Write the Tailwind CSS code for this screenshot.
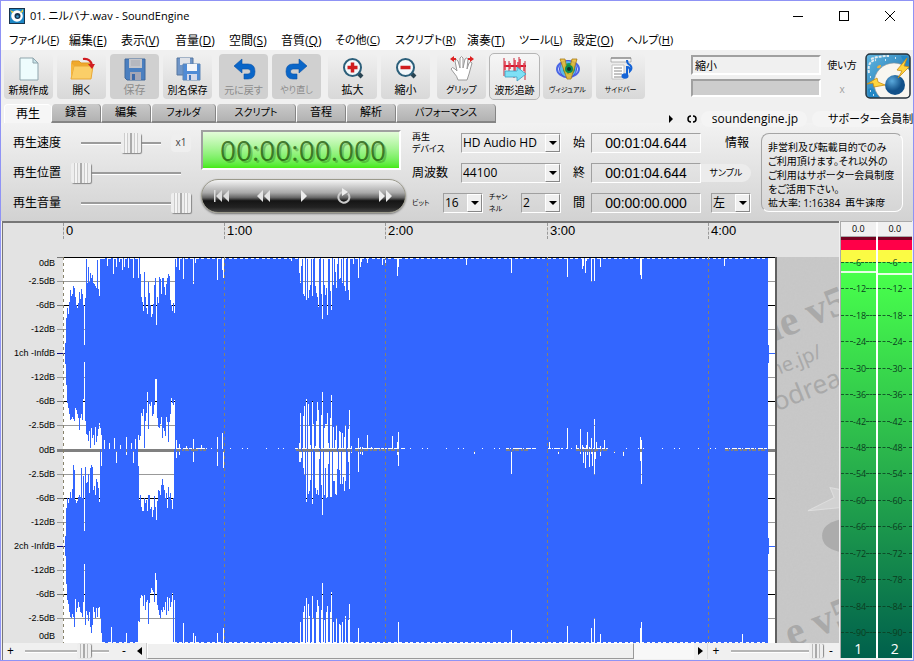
<!DOCTYPE html>
<html lang="ja">
<head>
    <meta charset="UTF-8">
    <meta name="viewport" content="width=device-width, initial-scale=1.0">
    <title>SoundEngine</title>
    <script src="https://cdn.jsdelivr.net/npm/@tailwindcss/browser@4"></script>
</head>
<body class="h-screen flex flex-col overflow-hidden border border-[#8f93f5] bg-[#f0f0f0] text-black text-xs font-['Open_Sans','Noto_Sans_CJK_JP',sans-serif] [font-feature-settings:'palt']">

    <!-- Title bar -->
    <header class="h-[30px] shrink-0 flex items-center bg-white pl-2">
        <svg class="w-4 h-4 mr-[5px]" viewBox="0 0 16 16">
            <rect width="16" height="16" fill="#1d86c4"/>
            <rect x=".5" y=".5" width="15" height="15" fill="none" stroke="#17334a"/>
            <circle cx="8" cy="8" r="5.8" fill="#fff"/>
            <circle cx="8.5" cy="8" r="3" fill="#16344e"/>
            <circle cx="8.5" cy="8.5" r="1.3" fill="#3b9bd0"/>
            <path d="M1 2l4 2-2 1zM14 1l-3 4 3-1z" fill="#f5d23c"/>
        </svg>
        <h1 class="flex-1 text-[11px]">01. ニルバナ.wav - SoundEngine</h1>
        <button aria-label="最小化" class="w-[46px] h-full flex items-center justify-center"><svg class="w-[10px] h-[10px]" viewBox="0 0 10 10" shape-rendering="crispEdges"><path d="M0 5.5h10" stroke="#000"/></svg></button>
        <button aria-label="最大化" class="w-[46px] h-full flex items-center justify-center"><svg class="w-[10px] h-[10px]" viewBox="0 0 10 10" shape-rendering="crispEdges"><path d="M.5.5h9v9h-9z" fill="none" stroke="#000"/></svg></button>
        <button aria-label="閉じる" class="w-[46px] h-full flex items-center justify-center"><svg class="w-[10px] h-[10px]" viewBox="0 0 10 10"><path d="M0 0l10 10M10 0L0 10" stroke="#000"/></svg></button>
    </header>

    <!-- Menu -->
    <nav class="h-[19px] shrink-0 flex items-center bg-white pl-2 whitespace-nowrap">
        <button class="w-[60px] text-left text-[11px]">ファイル(<u>F</u>)</button>
        <button class="w-[52px] text-left">編集(<u>E</u>)</button>
        <button class="w-[54px] text-left">表示(<u>V</u>)</button>
        <button class="w-[54px] text-left">音量(<u>D</u>)</button>
        <button class="w-[52px] text-left">空間(<u>S</u>)</button>
        <button class="w-[54px] text-left">音質(<u>Q</u>)</button>
        <button class="w-[60px] text-left text-[11px]">その他(<u>C</u>)</button>
        <button class="w-[72px] text-left text-[11px]">スクリプト(<u>R</u>)</button>
        <button class="w-[52px] text-left">演奏(<u>T</u>)</button>
        <button class="w-[54px] text-left text-[11px]">ツール(<u>L</u>)</button>
        <button class="w-[54px] text-left">設定(<u>O</u>)</button>
        <button class="w-[54px] text-left text-[11px]">ヘルプ(<u>H</u>)</button>
    </nav>

    <!-- Toolbar -->
    <div class="h-[54px] shrink-0 flex items-start pl-[3px] pr-[2px] pt-[3px]">
        <div class="flex gap-[7px] pt-px">
            <div class="flex gap-1">
                <button class="w-[49px] h-[45px] rounded-sm bg-linear-to-b from-[#f0f0f0] to-[#d8d8d8] flex flex-col items-center">
                    <svg class="w-7 h-7" viewBox="0 0 28 28"><path d="M5 4h13l5 5v17H5z" fill="#eefcfd" stroke="#8fa5ad"/><path d="M18 4v5h5z" fill="#c9e5ea" stroke="#8fa5ad"/></svg>
                    <span class="text-[10px] leading-4">新規作成</span>
                </button>
                <button class="w-[49px] h-[45px] rounded-sm bg-linear-to-b from-[#f0f0f0] to-[#d8d8d8] flex flex-col items-center">
                    <svg class="w-7 h-7" viewBox="0 0 28 28"><path d="M4 7h7l2 2h10v6H4z" fill="#f0a92c" stroke="#dd9826"/><path d="M3 25l3-13h19l-2 13z" fill="#fbcf68" stroke="#e9a836"/><path d="M3 8v17l3-13" fill="#f5b63f"/><path d="M15 5q7-1 9 6" fill="none" stroke="#d01c22" stroke-width="2"/><path d="M20 10h7l-3 5z" fill="#d01c22"/></svg>
                    <span class="text-[11px] leading-4">開く</span>
                </button>
                <button disabled class="w-[49px] h-[45px] rounded-sm bg-[#d0d0d0] text-[#8c8c8c] flex flex-col items-center">
                    <svg class="w-7 h-7" viewBox="0 0 28 28"><path d="M4 5h20v21H6l-2-2z" fill="#4a7fc0" stroke="#41689a"/><path d="M8 5h13v9H8z" fill="#c3c5cb"/><path d="M10 7h9M10 9h9M10 11h9" stroke="#a8abb3"/><path d="M9 18h11v8H9z" fill="#a4a6b5"/><path d="M11 20h3v6h-3z" fill="#3d69a8"/></svg>
                    <span class="text-[11px] leading-4">保存</span>
                </button>
                <button class="w-[49px] h-[45px] rounded-sm bg-linear-to-b from-[#f0f0f0] to-[#d8d8d8] flex flex-col items-center">
                    <svg class="w-7 h-7" viewBox="0 0 28 28"><path d="M3 4h16v17H3z" fill="#7096c8" stroke="#56779f"/><path d="M6 4h10v7H6z" fill="#dfe2e8"/><path d="M9 10h17v16H9z" fill="#4f8bd6" stroke="#5f86b5"/><path d="M13 10h10v7H13z" fill="#f4f6fa"/><path d="M13 20h10v6H13z" fill="#d3d8ea"/><path d="M15 21h2v5h-2z" fill="#3f74bd"/></svg>
                    <span class="text-[10px] leading-4">別名保存</span>
                </button>
            </div>
            <div class="flex gap-1">
                <button disabled class="w-[49px] h-[45px] rounded-sm bg-[#d0d0d0] text-[#8c8c8c] flex flex-col items-center">
                    <svg class="w-7 h-7" viewBox="0 0 28 28"><path d="M12 5L4 12l8 7v-4h6q2.500 0 2.500 2.500T18 20h-4v5h4q7 0 7-7.500T18 10h-6z" fill="#0a66c8" stroke="#0750a8" stroke-width=".6"/></svg>
                    <span class="text-[10px] leading-4">元に戻す</span>
                </button>
                <button disabled class="w-[49px] h-[45px] rounded-sm bg-[#d0d0d0] text-[#8c8c8c] flex flex-col items-center">
                    <svg class="w-7 h-7" viewBox="0 0 28 28"><path d="M16 5l8 7-8 7v-4h-6q-2.500 0-2.500 2.500T10 20h4v5h-4q-7 0-7-7.500T10 10h6z" fill="#0a66c8" stroke="#0750a8" stroke-width=".6"/></svg>
                    <span class="text-[9px] leading-4">やり直し</span>
                </button>
            </div>
            <div class="flex gap-1">
                <button class="w-[49px] h-[45px] rounded-sm bg-linear-to-b from-[#f0f0f0] to-[#d8d8d8] flex flex-col items-center">
                    <svg class="w-7 h-7" viewBox="0 0 28 28"><path d="M19 19l4 4" stroke="#2a4452" stroke-width="4"/><circle cx="13.500" cy="13.500" r="8.500" fill="#f3f8fb" stroke="#2c5f7a" stroke-width="2"/><path d="M13.500 8.500v10M8.500 13.500h10" stroke="#cf1d20" stroke-width="3.500"/></svg>
                    <span class="text-[11px] leading-4">拡大</span>
                </button>
                <button class="w-[49px] h-[45px] rounded-sm bg-linear-to-b from-[#f0f0f0] to-[#d8d8d8] flex flex-col items-center">
                    <svg class="w-7 h-7" viewBox="0 0 28 28"><path d="M19 19l4 4" stroke="#2a4452" stroke-width="4"/><circle cx="13.500" cy="13.500" r="8.500" fill="#f3f8fb" stroke="#2c5f7a" stroke-width="2"/><path d="M8.500 13.500h10" stroke="#cf1d20" stroke-width="3.500"/></svg>
                    <span class="text-[11px] leading-4">縮小</span>
                </button>
            </div>
            <div class="flex gap-1">
                <button class="w-[49px] h-[45px] rounded-sm bg-linear-to-b from-[#f0f0f0] to-[#d8d8d8] flex flex-col items-center">
                    <svg class="w-7 h-7" viewBox="0 0 28 28"><path d="M10 26q-1-4-4-7l-3-4q1-3 4 0l2 2L7 7q1-3 3 0l2 7V4q1.500-3 3 0v10l2-9q2-2 3 0l-1 10 2-6q2-2 3 0l-3 11-2 6z" fill="#fff" stroke="#9a9a9a"/><path d="M2 5l4-3v2h2v2H6v2zM26 5l-4-3v2h-2v2h2v2z" fill="#d22"/></svg>
                    <span class="text-[9px] leading-4">グリップ</span>
                </button>
                <button class="w-[49px] h-[45px] rounded-sm bg-linear-to-b from-[#f6f6f6] to-[#e4e4e4] outline outline-[#b5b5b5] flex flex-col items-center">
                    <svg class="w-7 h-7" viewBox="0 0 28 28"><path d="M3 12h22" stroke="#d3152b" stroke-width="2"/><path d="M3 4v18M8 7v12M13 4v20M18 3v18M24 7v19" stroke="#c8283a"/><path d="M4 7v9M9 9v6M14 6v14M17 8v10M19 5v12M23 9v8" stroke="#e2394b" stroke-width="1.500"/><path d="M4 17h12v-4l9 7-9 7v-4H4z" fill="#7fe0f5" stroke="#3a9fc0" stroke-width=".8"/></svg>
                    <span class="text-[10px] leading-4">波形追跡</span>
                </button>
                <button class="w-[49px] h-[45px] rounded-sm bg-linear-to-b from-[#f0f0f0] to-[#d8d8d8] flex flex-col items-center">
                    <svg class="w-7 h-7" viewBox="0 0 28 28"><ellipse cx="14" cy="15" rx="11" ry="8" fill="#cfe3ff" stroke="#4a67e6" stroke-width="2"/><circle cx="14" cy="15" r="8.500" fill="#5cb8e8" stroke="#4a4ad8"/><circle cx="15" cy="15" r="6" fill="#0c9a5a"/><path d="M6 5h5l3 15 4-15h5l-6 20h-4z" fill="#f1bf2d" fill-opacity=".85" stroke="#a57a1c" stroke-width=".8"/><circle cx="15" cy="15" r="4" fill="#0b8a50"/><circle cx="15" cy="15" r="2" fill="#10302a"/></svg>
                    <span class="text-[7px] leading-4">ヴィジュアル</span>
                </button>
                <button class="w-[49px] h-[45px] rounded-sm bg-linear-to-b from-[#f0f0f0] to-[#d8d8d8] flex flex-col items-center">
                    <svg class="w-7 h-7" viewBox="0 0 28 28"><path d="M4 4h20v4H4z" fill="#f6f6f6" stroke="#999" stroke-width=".7"/><path d="M4 4h20" stroke="#777"/><path d="M5 11h12v14H5z" fill="#fff" stroke="#c2c2c2"/><path d="M7 14h8M7 17h8M7 20h8M7 23h8" stroke="#888"/><path d="M20 6q0 4 3 5 3 3 0 6 0-4-3-4v9" fill="none" stroke="#1463d6" stroke-width="2"/><ellipse cx="18" cy="22" rx="3.500" ry="2.800" fill="#1463d6"/></svg>
                    <span class="text-[7px] leading-4">サイドバー</span>
                </button>
            </div>
        </div>
        <div class="ml-auto flex gap-1">
            <div class="w-[130px] flex flex-col gap-1 pt-[2px]">
                <input type="text" aria-label="状態" value="縮小" readonly class="h-5 px-[2px] text-[11px] bg-[#f0f0f0] border-2 border-t-[#a0a0a0] border-l-[#a0a0a0] border-b-white border-r-white outline-none">
                <div class="h-[18px] bg-[#cdcdcd] border-2 border-t-[#a0a0a0] border-l-[#a0a0a0] border-b-white border-r-white"></div>
            </div>
            <div class="w-[34px] flex flex-col items-center text-[10px]">
                <button class="h-[25px] whitespace-nowrap">使い方</button>
                <button disabled class="h-[23px] text-[#a0a0a0]">x</button>
            </div>
            <svg class="w-[46px] h-[46px] ml-[2px]" viewBox="0 0 46 46">
                <defs>
                    <linearGradient id="sky" x2="1" y2="1"><stop stop-color="#61b9e4"/><stop offset="1" stop-color="#12629f"/></linearGradient>
                    <radialGradient id="ball" cx=".35" cy=".3"><stop stop-color="#5aa9dc"/><stop offset="1" stop-color="#125189"/></radialGradient>
                    <clipPath id="frame"><rect x="1" y="1" width="44" height="44" rx="4"/></clipPath>
                </defs>
                <g clip-path="url(#frame)">
                    <rect width="46" height="46" fill="url(#sky)"/>
                    <path d="M3 36q6-3 10 8H4zM36 3h6l2 8q-6-1-8-8z" fill="#2187c5"/>
                    <path d="M4 20q-2-12 7-13M6 6q8-3 18-3" fill="none" stroke="#e3ebef" stroke-width="2" stroke-dasharray="3 1"/>
                    <circle cx="29" cy="30" r="20" fill="#f8f6f0" stroke="#8d9499" stroke-width=".6"/>
                    <circle cx="30" cy="32" r="10" fill="url(#ball)"/>
                    <path d="M42 5l-10 12 5 1-4 7 11-11-5-1 3-8zM2 31l10-6 1 4 7 3-11 2-1-4z" fill="#ffd53d" stroke="#c98a12" stroke-width=".8"/>
                    <path d="M12 15q0-3 4-3 0 4-4 3z" fill="#f2b13a"/>
                    <path d="M5 38h1M8 42h1M30 5h1M5 24h1M20 7h1" stroke="#fff" stroke-width="1.500"/>
                </g>
                <rect x="1" y="1" width="44" height="44" rx="4" fill="none" stroke="#26333d" stroke-width="1.500"/>
            </svg>
        </div>
    </div>

    <!-- Tabs -->
    <div class="relative z-10 h-[19px] shrink-0 flex pl-[3px]">
        <div class="flex h-[19px]" role="tablist">
            <button role="tab" class="w-[47px] rounded-t bg-[#f6f6f6] border-t border-l border-white">再生</button>
            <button role="tab" class="w-[50px] rounded-t bg-linear-to-b from-[#cacaca] to-[#b2b2b2] border-l border-r border-l-white border-r-[#858585] border-b-2 border-b-[#858585] text-[11px]">録音</button>
            <button role="tab" class="w-[50px] rounded-t bg-linear-to-b from-[#cacaca] to-[#b2b2b2] border-l border-r border-l-white border-r-[#858585] border-b-2 border-b-[#858585] text-[11px]">編集</button>
            <button role="tab" class="w-[65px] rounded-t bg-linear-to-b from-[#cacaca] to-[#b2b2b2] border-l border-r border-l-white border-r-[#858585] border-b-2 border-b-[#858585] text-[10px]">フォルダ</button>
            <button role="tab" class="w-[80px] rounded-t bg-linear-to-b from-[#cacaca] to-[#b2b2b2] border-l border-r border-l-white border-r-[#858585] border-b-2 border-b-[#858585] text-[10px]">スクリプト</button>
            <button role="tab" class="w-[50px] rounded-t bg-linear-to-b from-[#cacaca] to-[#b2b2b2] border-l border-r border-l-white border-r-[#858585] border-b-2 border-b-[#858585] text-[11px]">音程</button>
            <button role="tab" class="w-[50px] rounded-t bg-linear-to-b from-[#cacaca] to-[#b2b2b2] border-l border-r border-l-white border-r-[#858585] border-b-2 border-b-[#858585] text-[11px]">解析</button>
            <button role="tab" class="w-[100px] rounded-t bg-linear-to-b from-[#cacaca] to-[#b2b2b2] border-l border-r border-l-white border-r-[#858585] border-b-2 border-b-[#858585] text-[10px]">パフォーマンス</button>
        </div>
        <div class="ml-auto w-[246px] h-[19px] mt-[5px] flex items-center overflow-hidden whitespace-nowrap">
            <button aria-label="次へ" class="w-5 shrink-0"><svg class="w-2 h-2" viewBox="0 0 8 8"><path d="M2 0l4 4-4 4z"/></svg></button>
            <button aria-label="更新" class="w-[14px] shrink-0"><svg class="w-[10px] h-2" viewBox="0 0 10 8"><path d="M4 1Q1 1 1 4t3 3M6 1q3 0 3 3T6 7" fill="none" stroke="#000" stroke-width="1.500"/></svg></button>
            <a href="#" class="w-[106px] pl-[2px] shrink-0 text-center rounded-full bg-[#f4f4f4]">soundengine.jp</a>
            <a href="#" class="ml-[5px] pl-4 shrink-0 rounded-full bg-[#f4f4f4] text-[11px] leading-4">サポーター会員制度</a>
        </div>
    </div>

    <!-- Playback panel -->
    <div class="h-[98px] shrink-0 flex pl-3 pr-[10px] pt-[5px] bg-linear-to-b from-[#f2f2f2] to-[#d2d2d2]">
        <div class="w-[188px] shrink-0">
            <div class="h-[30px] flex items-center">
                <label for="speed" class="w-[58px]">再生速度</label>
                <input id="speed" type="range" min="0" max="80" value="50" class="w-[100px] h-5 appearance-none bg-[linear-gradient(#9b9b9b_67%,#fff_67%)] bg-[length:calc(100%-20px)_3px] bg-center bg-no-repeat [&::-webkit-slider-thumb]:appearance-none [&::-webkit-slider-thumb]:w-5 [&::-webkit-slider-thumb]:h-5 [&::-webkit-slider-thumb]:rounded-[2px] [&::-webkit-slider-thumb]:shadow-[1px_1px_1px_#888] [&::-webkit-slider-thumb]:bg-[linear-gradient(90deg,#eee_0_3px,#ccc_3px_4px,#f4f4f4_4px_6px,#ccc_6px_7px,#eee_7px_9px,#aaa_9px_11px,#eee_11px_13px,#ccc_13px_14px,#f4f4f4_14px_16px,#ccc_16px_17px,#eee_17px)]">
                <button class="w-5 h-[18px] text-[10px] text-[#444] bg-[#efefef] rounded-sm">x1</button>
            </div>
            <div class="h-[30px] flex items-center">
                <label for="position" class="w-[58px]">再生位置</label>
                <input id="position" type="range" min="0" max="100" value="0" class="w-[120px] h-5 appearance-none bg-[linear-gradient(#9b9b9b_67%,#fff_67%)] bg-[length:calc(100%-20px)_3px] bg-center bg-no-repeat [&::-webkit-slider-thumb]:appearance-none [&::-webkit-slider-thumb]:w-5 [&::-webkit-slider-thumb]:h-5 [&::-webkit-slider-thumb]:rounded-[2px] [&::-webkit-slider-thumb]:shadow-[1px_1px_1px_#888] [&::-webkit-slider-thumb]:bg-[linear-gradient(90deg,#eee_0_3px,#ccc_3px_4px,#f4f4f4_4px_6px,#ccc_6px_7px,#eee_7px_9px,#aaa_9px_11px,#eee_11px_13px,#ccc_13px_14px,#f4f4f4_14px_16px,#ccc_16px_17px,#eee_17px)]">
            </div>
            <div class="h-[30px] flex items-center">
                <label for="volume" class="w-[58px]">再生音量</label>
                <input id="volume" type="range" min="0" max="100" value="100" class="w-[120px] h-5 appearance-none bg-[linear-gradient(#9b9b9b_67%,#fff_67%)] bg-[length:calc(100%-20px)_3px] bg-center bg-no-repeat [&::-webkit-slider-thumb]:appearance-none [&::-webkit-slider-thumb]:w-5 [&::-webkit-slider-thumb]:h-5 [&::-webkit-slider-thumb]:rounded-[2px] [&::-webkit-slider-thumb]:shadow-[1px_1px_1px_#888] [&::-webkit-slider-thumb]:bg-[linear-gradient(90deg,#eee_0_3px,#ccc_3px_4px,#f4f4f4_4px_6px,#ccc_6px_7px,#eee_7px_9px,#aaa_9px_11px,#eee_11px_13px,#ccc_13px_14px,#f4f4f4_14px_16px,#ccc_16px_17px,#eee_17px)]">
            </div>
        </div>

        <div class="w-[205px] shrink-0 pt-[2px] flex flex-col items-start gap-[9px]">
            <div class="w-[200px] h-10 pl-1 flex items-center justify-center border-2 border-t-[#a0a0a0] border-l-[#a0a0a0] border-b-white border-r-white bg-linear-to-b from-[#e2fbd8] to-[#44ea0c] text-[28px] leading-none text-[#245a10]/80 text-shadow-[2px_2px_0_rgb(40_110_20/0.35)]">00:00:00.000</div>
            <div class="w-full h-[34px] px-3 flex items-center justify-between rounded-full border border-[#9b9a8c] bg-[linear-gradient(#f4f4f4,#a8a8a8_40%,#666_55%,#151515_65%,#222_85%,#444)] shadow-[0_1px_2px_#777]">
                <button aria-label="先頭"><svg class="w-4 h-3" viewBox="0 0 16 12" fill="#ddd"><path d="M0 0h1.500v12H0zM8 0v12L2 6zM15 0v12L9 6z"/></svg></button>
                <button aria-label="巻戻し"><svg class="w-4 h-3" viewBox="0 0 16 12" fill="#e4e4e4"><path d="M8 0v12L2 6zM15 0v12L9 6z"/></svg></button>
                <button aria-label="再生"><svg class="w-4 h-3" viewBox="0 0 16 12" fill="#eee"><path d="M5 0l6 6-6 6z"/></svg></button>
                <button aria-label="リピート"><svg class="w-4 h-4" viewBox="0 0 16 16"><path d="M12 5.500a5.500 5.500 0 1 1-6-1.500" fill="none" stroke="#ccc" stroke-width="2"/><path d="M6 0l6 4-6 4z" fill="#eee"/></svg></button>
                <button aria-label="早送り"><svg class="w-4 h-3" viewBox="0 0 16 12" fill="#eee"><path d="M2 0l6 6-6 6zM9 0l6 6-6 6z"/></svg></button>
            </div>
        </div>

        <!-- Device settings -->
        <div class="w-[155px] ml-[6px] shrink-0">
            <div class="h-[30px] flex items-center">
                <label for="device" class="w-[49px] text-[9px] leading-[12px]">再生<br>デバイス</label>
                <div class="relative w-[100px] h-5">
                    <select id="device" class="appearance-none w-full h-full px-px text-[12px] bg-transparent border border-t-[#a0a0a0] border-l-[#a0a0a0] border-b-white border-r-white"><option>HD Audio HD</option></select>
                    <span class="absolute right-px top-px w-[15px] h-[18px] flex items-center justify-center pointer-events-none bg-[#f0f0f0] border border-white border-b-[#888] border-r-[#888]"><svg class="w-2 h-1" viewBox="0 0 8 4"><path d="M0 0h8L4 4z"/></svg></span>
                </div>
            </div>
            <div class="h-[30px] flex items-center">
                <label for="rate" class="w-[49px]">周波数</label>
                <div class="relative w-[100px] h-5">
                    <select id="rate" class="appearance-none w-full h-full px-px text-[12px] bg-transparent border border-t-[#a0a0a0] border-l-[#a0a0a0] border-b-white border-r-white"><option>44100</option></select>
                    <span class="absolute right-px top-px w-[15px] h-[18px] flex items-center justify-center pointer-events-none bg-[#f0f0f0] border border-white border-b-[#888] border-r-[#888]"><svg class="w-2 h-1" viewBox="0 0 8 4"><path d="M0 0h8L4 4z"/></svg></span>
                </div>
            </div>
            <div class="h-[30px] flex items-center">
                <label for="bit" class="w-[31px] text-[7px]">ビット</label>
                <div class="relative w-10 h-5">
                    <select id="bit" class="appearance-none w-full h-full px-px text-[12px] bg-transparent border border-t-[#a0a0a0] border-l-[#a0a0a0] border-b-white border-r-white"><option>16</option></select>
                    <span class="absolute right-px top-px w-[15px] h-[18px] flex items-center justify-center pointer-events-none bg-[#f0f0f0] border border-white border-b-[#888] border-r-[#888]"><svg class="w-2 h-1" viewBox="0 0 8 4"><path d="M0 0h8L4 4z"/></svg></span>
                </div>
                <label for="channel" class="w-[38px] pl-[6px] text-[7px] leading-[12px]">チャン<br>ネル</label>
                <div class="relative w-10 h-5">
                    <select id="channel" class="appearance-none w-full h-full px-px text-[12px] bg-transparent border border-t-[#a0a0a0] border-l-[#a0a0a0] border-b-white border-r-white"><option>2</option></select>
                    <span class="absolute right-px top-px w-[15px] h-[18px] flex items-center justify-center pointer-events-none bg-[#f0f0f0] border border-white border-b-[#888] border-r-[#888]"><svg class="w-2 h-1" viewBox="0 0 8 4"><path d="M0 0h8L4 4z"/></svg></span>
                </div>
            </div>
        </div>

        <!-- Selection times -->
        <div class="w-[134px] pl-[6px] shrink-0">
            <div class="h-[30px] flex items-center">
                <label for="start" class="w-[18px]">始</label>
                <input id="start" type="text" value="00:01:04.644" class="w-[110px] h-5 text-center text-[14px] font-['Liberation_Sans',sans-serif] border border-t-[#a0a0a0] border-l-[#a0a0a0] border-b-white border-r-white outline-none">
            </div>
            <div class="h-[30px] flex items-center">
                <label for="end" class="w-[18px]">終</label>
                <input id="end" type="text" value="00:01:04.644" class="w-[110px] h-5 text-center text-[14px] font-['Liberation_Sans',sans-serif] border border-t-[#a0a0a0] border-l-[#a0a0a0] border-b-white border-r-white outline-none">
            </div>
            <div class="h-[30px] flex items-center">
                <label for="span" class="w-[18px]">間</label>
                <input id="span" type="text" value="00:00:00.000" class="w-[110px] h-5 text-center text-[14px] font-['Liberation_Sans',sans-serif] border border-t-[#a0a0a0] border-l-[#a0a0a0] border-b-white border-r-white outline-none">
            </div>
        </div>
        <div class="w-[50px] shrink-0">
            <div class="h-[30px] flex items-center justify-end pr-[2px]"><label for="info">情報</label></div>
            <div class="h-[30px] flex items-center"><button class="w-full h-[18px] rounded-r-full bg-[#ececec] text-[9px]">サンプル</button></div>
            <div class="h-[30px] flex items-center justify-end">
                <div class="relative w-10 h-5">
                    <select aria-label="基準" class="appearance-none w-full h-full px-px text-[12px] bg-transparent border border-t-[#a0a0a0] border-l-[#a0a0a0] border-b-white border-r-white"><option>左</option></select>
                    <span class="absolute right-px top-px w-[15px] h-[18px] flex items-center justify-center pointer-events-none bg-[#f0f0f0] border border-white border-b-[#888] border-r-[#888]"><svg class="w-2 h-1" viewBox="0 0 8 4"><path d="M0 0h8L4 4z"/></svg></span>
                </div>
            </div>
        </div>
        <div class="flex-1 min-w-0 ml-[10px] mt-[5px] h-[79px] p-[6px] pr-0 rounded-lg border border-t-[#a5a5a5] border-l-[#a5a5a5] border-b-white border-r-white">
            <textarea id="info" readonly class="block w-full h-[67px] resize-none overflow-hidden whitespace-pre text-[10px] leading-[14px] outline-none">非営利及び転載目的でのみ
ご利用頂けます。それ以外の
ご利用はサポーター会員制度
をご活用下さい。
拡大率: 1:16384  再生速度</textarea>
        </div>
    </div>

    <!-- Waveform and meters -->
    <main class="flex-1 min-h-0 flex gap-px pr-px">
        <div class="flex-1 min-w-0 flex flex-col ml-px border-t-2 border-l border-[#777]">
            <div class="h-[34px] shrink-0 flex pl-[60px] bg-[#e3e3e3] text-[13px] leading-4 font-['Liberation_Sans',sans-serif]">
                <span class="w-[161px] h-4 pl-[2px] border-l border-dashed border-[#999]">0</span>
                <span class="w-[161px] h-4 pl-[2px] border-l border-dashed border-[#999]">1:00</span>
                <span class="w-[162px] h-4 pl-[2px] border-l border-dashed border-[#999]">2:00</span>
                <span class="w-[161px] h-4 pl-[2px] border-l border-dashed border-[#999]">3:00</span>
                <span class="flex-1 h-4 pl-[2px] border-l border-dashed border-[#999]">4:00</span>
            </div>
            <div class="flex-1 min-h-0 flex bg-[#e3e3e3]">
                <ul class="w-[54px] flex flex-col text-right pr-[2px] text-[9px] leading-none font-['Liberation_Sans',sans-serif] [&>li]:flex [&>li]:items-center [&>li]:justify-end [&>li]:flex-2 [&>li:first-child]:flex-1 [&>li:last-child]:flex-1">
                    <li>0dB</li><li>-2.5dB</li><li>-6dB</li><li>-12dB</li><li>1ch -InfdB</li><li>-12dB</li><li>-6dB</li><li>-2.5dB</li>
                    <li>0dB</li><li>-2.5dB</li><li>-6dB</li><li>-12dB</li><li>2ch -InfdB</li><li>-12dB</li><li>-6dB</li><li>-2.5dB</li><li>0dB</li>
                </ul>
                <svg class="flex-1 min-w-0 h-full" viewBox="57 258 720 385" preserveAspectRatio="none" shape-rendering="crispEdges">
                    <rect x="63" y="258" width="712" height="385" fill="#fff"/>
                    <path d="M57 282.500h718M57 330.500h718M57 378.500h718M57 426.500h718M57 474.500h718M57 522.500h718M57 570.500h718M57 618.500h718" stroke="#999"/>
                    <path d="M63 258.500h712M63 306.500h712M63 402.500h712M63 498.500h712M63 594.500h712" stroke="#000"/>
                    <path d="M57 258.500h6M57 306.500h6M57 402.500h6M57 498.500h6M57 594.500h6" stroke="#777"/>
                    <path d="M57 451h718" stroke="#808080" stroke-width="2"/>
                    <path d="M57 354.500h8M57 546.500h8" stroke="#0a0a80"/>
                    <path d="M768 354.500h7M768 546.500h7" stroke="#3366ff"/>
                    <path id="wave" stroke="#3366ff" fill="none"/>
                    <path d="M176 449.500h30M295 449.500h55M355 449.500h50M506 449.500h30M548 449.500h15M576 449.500h32M725 449.500h42" stroke="#fff" stroke-dasharray="3 1 1 2 5 1"/>
                    <path d="M206 449.500h560" stroke="#fff" stroke-dasharray="1 4 1 18 1 11"/>
                    <path d="M176 450.500h30M296 450.500h54M355 450.500h45M506 450.500h24M576 450.500h32M725 450.500h42" stroke="#808080" stroke-dasharray="4 2 2 1"/>
                    <path d="M63.500 258v385M224.500 258v385M385.500 258v385M547.500 258v385M708.500 258v385" stroke="#87826c" stroke-dasharray="3 3"/>
                    <path d="M776 258v385" stroke="#606060" stroke-width="2"/>
                </svg>
                <svg class="w-[62px] h-full shrink-0 bg-[#c8c8c8]" viewBox="0 0 62 385" preserveAspectRatio="xMinYMin slice">
                    <filter id="grain"><feTurbulence type="fractalNoise" baseFrequency=".5" numOctaves="2"/><feColorMatrix values="0 0 0 0 .5  0 0 0 0 .5  0 0 0 0 .5  .6 0 0 0 -.2"/></filter>
                    <rect width="62" height="385" filter="url(#grain)" opacity=".5"/>
                    <g fill="#a9a9a9" font-family="Noto Sans, sans-serif">
                        <text transform="translate(-14 89) rotate(-22)" font-size="42" font-weight="bold" font-family="Liberation Serif, serif">ne v5</text>
                        <text transform="translate(-4 120) rotate(-22)" font-size="20">ne.jp/</text>
                        <text transform="translate(0 154) rotate(-22)" font-size="26">odream</text>
                        <text transform="translate(14 390) rotate(-22)" font-size="42" font-weight="bold" font-family="Liberation Serif, serif">e v5</text>
                    </g>
                    <path d="M31 253l26-13-4-10 10 2v18z" fill="#d2d2d2" stroke="#dedede"/>
                    <path d="M62 262q-17 4-17 16t17 16z" fill="#acacac"/>
                </svg>
            </div>
            <!-- Zoom and scroll -->
            <div class="h-[17px] shrink-0 flex items-center bg-[#f0f0f0] pb-px">
                <button aria-label="縦拡大" class="w-[15px] leading-none">+</button>
                <input aria-label="縦ズーム" type="range" value="70" class="w-[98px] h-[14px] appearance-none bg-[linear-gradient(#b5b5b5_67%,#fff_67%)] bg-[length:calc(100%-14px)_3px] bg-center bg-no-repeat [&::-webkit-slider-thumb]:appearance-none [&::-webkit-slider-thumb]:w-[14px] [&::-webkit-slider-thumb]:h-[14px] [&::-webkit-slider-thumb]:rounded-[2px] [&::-webkit-slider-thumb]:shadow-[1px_0_1px_#888] [&::-webkit-slider-thumb]:bg-[linear-gradient(90deg,#eee_0_3px,#bbb_3px_4px,#eee_4px_6px,#aaa_6px_8px,#eee_8px_10px,#bbb_10px_11px,#eee_11px)]">
                <button aria-label="縦縮小" class="w-4 leading-none">-</button>
                <button aria-label="左へ" class="w-[15px] h-full flex items-center justify-center border-r border-[#ccc]"><svg class="w-[5px] h-2" viewBox="0 0 5 8"><path d="M5 0v8L0 4z"/></svg></button>
                <div class="flex-1 h-full bg-[#f8f8f8]"><div class="w-[89%] h-full bg-[#f0f0f0] border border-white border-r-[#999] border-b-[#999]"></div></div>
                <button aria-label="右へ" class="w-[14px] h-full flex items-center justify-center border-r border-[#ddd]"><svg class="w-[5px] h-2" viewBox="0 0 5 8"><path d="M0 0v8l5-4z"/></svg></button>
                <button aria-label="横拡大" class="w-4 leading-none">+</button>
                <input aria-label="横ズーム" type="range" value="100" class="w-[99px] h-[14px] appearance-none bg-[linear-gradient(#b5b5b5_67%,#fff_67%)] bg-[length:calc(100%-14px)_3px] bg-center bg-no-repeat [&::-webkit-slider-thumb]:appearance-none [&::-webkit-slider-thumb]:w-[14px] [&::-webkit-slider-thumb]:h-[14px] [&::-webkit-slider-thumb]:rounded-[2px] [&::-webkit-slider-thumb]:shadow-[1px_0_1px_#888] [&::-webkit-slider-thumb]:bg-[linear-gradient(90deg,#eee_0_3px,#bbb_3px_4px,#eee_4px_6px,#aaa_6px_8px,#eee_8px_10px,#bbb_10px_11px,#eee_11px)]">
                <button aria-label="横縮小" class="w-4 leading-none">-</button>
            </div>
        </div>

        <!-- Level meters -->
        <div class="w-[72px] shrink-0 flex gap-[2px] mb-[2px] border-t border-l border-[#aaa] bg-white">
            <div class="flex-1 flex flex-col">
                <output class="h-[15px] bg-[#f0f0f0] text-center text-[9px] leading-[14px] border-b border-[#aaa]">0.0</output>
                <div class="relative flex-1 flex flex-col pt-3 pb-3 bg-[linear-gradient(#780020_0_3px,#ff0048_3px_13px,#fbfb44_13px_25px,#48ff4c_25px_34px,#e6ffe6_34px_36px,#48ff4c_36px,#2cb84c_50%,#00604c)]">
                    <div class="meter-scale flex-1 flex flex-col text-[9px] leading-none text-[#0b3d20]"></div>
                    <span class="absolute inset-x-0 bottom-[2px] text-center text-white text-[14px] leading-none">1</span>
                </div>
            </div>
            <div class="flex-1 flex flex-col">
                <output class="h-[15px] bg-[#f0f0f0] text-center text-[9px] leading-[14px] border-b border-[#aaa]">0.0</output>
                <div class="relative flex-1 flex flex-col pt-3 pb-3 bg-[linear-gradient(#780020_0_3px,#ff0048_3px_13px,#fbfb44_13px_25px,#48ff4c_25px_36px,#e6ffe6_36px_38px,#48ff4c_38px,#2cb84c_50%,#00604c)]">
                    <div class="meter-scale flex-1 flex flex-col text-[9px] leading-none text-[#0b3d20]"></div>
                    <span class="absolute inset-x-0 bottom-[2px] text-center text-white text-[14px] leading-none">2</span>
                </div>
            </div>
        </div>
    </main>

    <script>
        // Edges of both channels, one value per column from x = 65 to 101
        const head = {
            top1: [344,319,309,315,303,291,297,295,287,289,298,306,309,304,293,300,290,295,306,346,299,260,284,268,283,274,279,276,284,285,287,289,261,290,297,260,260],
            bot1: [365,386,404,409,415,421,420,418,420,422,409,411,415,419,431,419,415,421,400,363,422,435,436,442,432,449,429,439,436,446,428,443,437,430,424,429,436],
            top2: [536,508,498,503,498,492,498,489,465,470,500,503,501,497,495,497,468,498,476,531,467,483,482,474,493,468,465,467,490,486,495,479,482,488,502,450,466],
            bot2: [556,584,600,604,612,617,618,614,617,627,599,612,608,602,607,612,613,617,602,564,625,611,615,621,612,627,633,625,607,612,618,608,617,608,607,618,633]
        };

        // Quiet passage, x = 139 to 174
        const dip = {
            top1: [259,275,298,303,312,273,298,309,315,283,294,306,318,315,305,286,279,326,298,304,278,280,295,279,279,288,296,285,279,275,277,301,306,312,304,314],
            bot1: [441,437,414,417,410,449,422,414,393,430,405,407,403,417,415,406,380,380,419,428,429,425,418,439,429,432,437,418,423,443,423,415,399,404,406,401],
            top2: [500,495,507,511,511,498,503,500,511,495,495,509,507,517,510,496,507,520,501,490,491,495,485,479,485,490,498,493,508,487,497,493,500,509,498,450],
            bot2: [622,598,595,596,606,595,610,602,600,624,603,593,588,590,592,602,573,580,605,610,615,618,610,612,607,610,602,615,597,611,598,607,602,593,642,600]
        };

        // Single peaks that fall short, as x: y
        const peaks = {
            top1: {107:267,113:275,116:268,119:263,122:271,124:268,128:269,133:279,138:279,176:268,179:271,183:280,193:285,195:264,217:281,222:271,223:279,
                291:262,299:274,300:284,301:267,303:295,304:297,306:301,308:299,309:291,310:286,312:297,315:287,316:294,317:298,318:308,321:295,322:320,324:286,325:296,326:289,327:316,330:292,331:311,333:286,335:273,336:289,337:265,339:280,340:279,342:284,344:287,345:292,348:291,349:301,353:265,358:279,360:268,361:263,367:264,382:266,385:264,397:277,398:268,466:266,511:274,567:278,582:270,583:267,585:274,586:262,591:283,594:282,600:268,640:276,641:280,724:267},
            bot1: {104:441,109:444,114:439,120:446,126:438,131:444,135:440,138:436,176:441,179:445,186:447,193:440,201:446,217:438,222:434,
                299:444,300:414,303:417,304:407,306:400,308:405,309:427,310:446,312:402,313:425,315:447,316:422,317:403,318:411,321:416,322:393,324:429,325:425,326:425,327:414,328:444,330:419,331:396,333:428,335:441,336:426,339:432,340:433,342:434,344:438,345:426,348:430,349:411,351:447,358:439,360:448,362:448,367:436,371:448,392:437,397:443,398:433,549:443,567:429,576:446,580:430,582:446,583:448,586:446,587:433,589:448,591:439,594:420,596:443,600:447,604:441,640:438,641:441},
            top2: {116:463,126:455,133:463,138:466,176:458,179:455,193:462,217:466,223:468,
                299:462,300:462,301:458,303:468,304:475,306:502,308:494,309:491,310:480,312:504,315:488,316:494,317:490,318:495,319:459,321:485,322:515,324:495,325:468,326:498,327:497,328:464,330:497,331:497,333:481,334:481,335:494,336:495,337:469,339:470,340:484,342:484,343:477,344:491,345:481,348:462,349:489,351:453,358:472,360:454,362:455,397:455,398:466,474:454,511:474,558:454,580:454,583:463,585:468,587:455,589:467,591:454,592:466,594:475,595:459,600:456,614:453,623:456,640:461,641:484},
            bot2: {111:627,126:633,138:621,183:623,193:633,195:636,217:633,223:628,
                300:622,303:612,304:606,306:598,308:604,309:616,312:596,313:618,316:612,317:600,318:606,321:610,322:583,324:620,326:612,327:606,330:612,331:592,333:622,336:618,339:624,340:625,342:622,345:616,348:620,349:604,358:628,398:622,511:630,567:626,591:628,594:618,600:634,640:628,641:622,742:634}
        };

        function edge(name, x, full) {
            if (x <= 101) return head[name][x - 65];
            if (x >= 139 && x <= 174) return dip[name][x - 139];
            if (peaks[name][x]) return peaks[name][x];
            // small ripple where the signal is just below full scale
            const ripple = name === "top1" || name === "bot2" ? (x * x * 31 + x * 17) % 11 < 4 : false;
            return ripple ? full + (name === "top1" ? 1 : -1) : full;
        }

        let d = "";
        for (let x = 65; x < 768; x++) {
            d += `M${x}.5 ${edge("top1", x, 259)}V${edge("bot1", x, 451)}`;
            d += `M${x}.5 ${edge("top2", x, 450)}V${edge("bot2", x, 643)}`;
        }
        d += "M768.5 346V364M768.5 538V554";
        document.getElementById("wave").setAttribute("d", d);

        document.querySelectorAll(".meter-scale").forEach(function (scale) {
            for (let db = 6; db <= 90; db += 6) {
                scale.innerHTML += `<div class="flex-1 flex items-center"><i class="w-3 border-t border-dashed border-[#0b3d20]/80"></i><span>-${db}</span><i class="flex-1 border-t border-dashed border-[#0b3d20]/80"></i></div>`;
            }
        });
    </script>
</body>
</html>
